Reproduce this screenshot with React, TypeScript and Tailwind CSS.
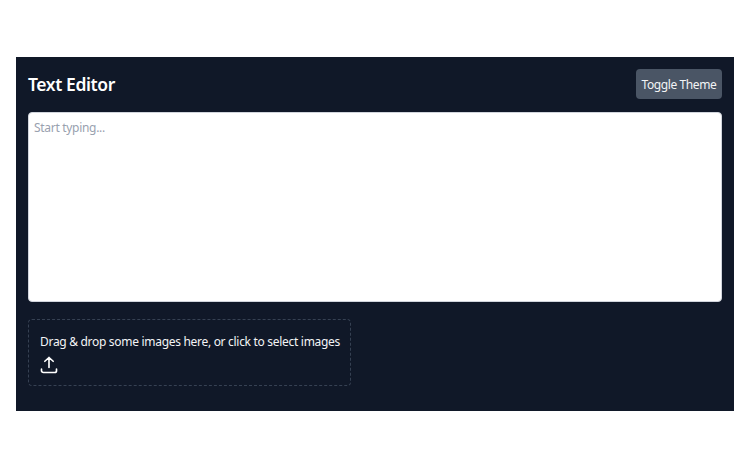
export default function App() {
  return (
    <div className="h-[469px] bg-white px-4 pt-[57px] font-['Noto_Sans',sans-serif]">
      <div className="h-[354px] bg-gray-900 p-3">
        <div className="mb-[13px] flex items-center justify-between">
          <h1 className="text-[17.5px] leading-7 font-semibold tracking-[-0.4px] text-white">Text Editor</h1>
          <button className="h-[30px] w-[86px] rounded bg-gray-600 pt-0.5 text-xs tracking-[-0.4px] text-gray-100">
            Toggle Theme
          </button>
        </div>
        <textarea
          className="block h-[190px] w-full resize-none rounded-sm border border-gray-300 bg-white px-[5px] py-[7px] text-xs tracking-[-0.3px] text-gray-900 outline-none placeholder:text-gray-400"
          placeholder="Start typing..."
        />
        <div className="mt-[17px] h-[67px] w-[323px] rounded border border-dashed border-gray-700 px-[11px] pt-3.5 text-xs tracking-[-0.3px] text-gray-100">
          <p className="whitespace-nowrap">Drag &amp; drop some images here, or click to select images</p>
          <svg
            className="mt-[5px] h-5 w-5 -translate-x-px text-white"
            viewBox="0 0 24 24"
            fill="none"
            stroke="currentColor"
            strokeWidth={2}
            strokeLinecap="round"
            strokeLinejoin="round"
          >
            <path d="M3 17v1.75A2.25 2.25 0 0 0 5.25 21h13.5A2.25 2.25 0 0 0 21 18.75V17M7 7.5 12 3m0 0 5 4.5M12 3v12" />
          </svg>
        </div>
      </div>
    </div>
  );
}
